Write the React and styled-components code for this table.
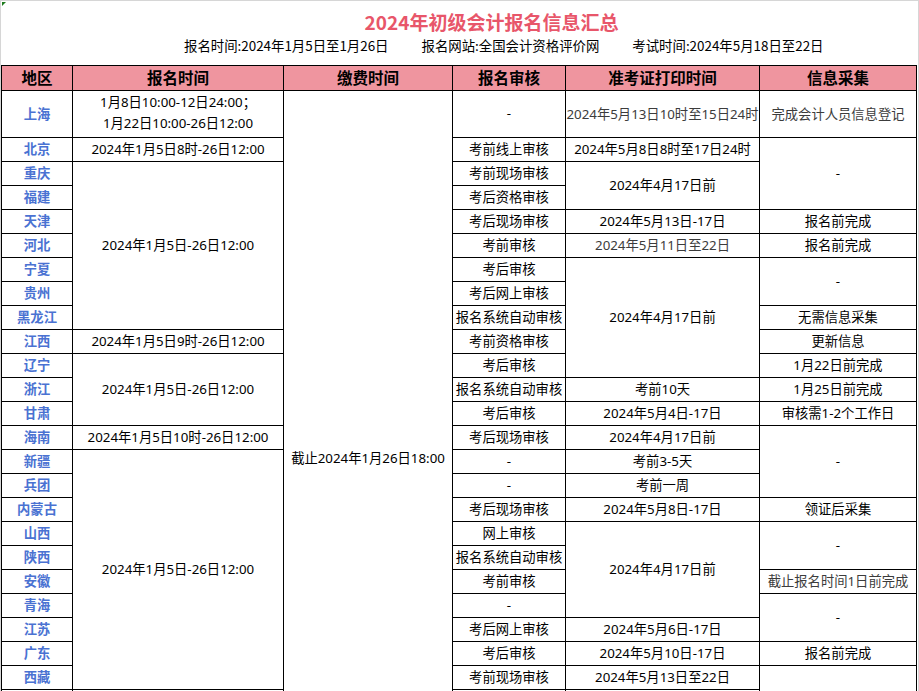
import React from 'react';
import styled, { createGlobalStyle } from 'styled-components';

const GlobalStyle = createGlobalStyle`
  html, body {
    margin: 0;
    padding: 0;
    overflow: hidden;
    background: #fff;
  }
  body {
    font-family: "Noto Sans CJK SC", "Noto Sans", sans-serif;
    color: #000;
  }
`;

const regions = [
  '上海', '北京', '重庆', '福建', '天津', '河北', '宁夏', '贵州', '黑龙江', '江西', '辽宁', '浙江',
  '甘肃', '海南', '新疆', '兵团', '内蒙古', '山西', '陕西', '安徽', '青海', '江苏', '广东', '西藏',
];

// [start, span, text, gray]
const signupTimes = [
  [0, 1, ['1月8日10:00-12日24:00；', '1月22日10:00-26日12:00']],
  [1, 1, '2024年1月5日8时-26日12:00'],
  [2, 7, '2024年1月5日-26日12:00'],
  [9, 1, '2024年1月5日9时-26日12:00'],
  [10, 3, '2024年1月5日-26日12:00'],
  [13, 1, '2024年1月5日10时-26日12:00'],
  [14, 10, '2024年1月5日-26日12:00'],
];

const reviews = [
  '-', '考前线上审核', '考前现场审核', '考后资格审核', '考后现场审核', '考前审核', '考后审核',
  '考后网上审核', '报名系统自动审核', '考前资格审核', '考后审核', '报名系统自动审核', '考后审核',
  '考后现场审核', '-', '-', '考后现场审核', '网上审核', '报名系统自动审核', '考前审核', '-',
  '考后网上审核', '考后审核', '考前现场审核',
];

const printTimes = [
  [0, 1, '2024年5月13日10时至15日24时', true],
  [1, 1, '2024年5月8日8时至17日24时'],
  [2, 2, '2024年4月17日前'],
  [4, 1, '2024年5月13日-17日'],
  [5, 1, '2024年5月11日至22日', true],
  [6, 5, '2024年4月17日前'],
  [11, 1, '考前10天'],
  [12, 1, '2024年5月4日-17日'],
  [13, 1, '2024年4月17日前'],
  [14, 1, '考前3-5天'],
  [15, 1, '考前一周'],
  [16, 1, '2024年5月8日-17日'],
  [17, 4, '2024年4月17日前'],
  [21, 1, '2024年5月6日-17日'],
  [22, 1, '2024年5月10日-17日'],
  [23, 1, '2024年5月13日至22日'],
];

const infoCollect = [
  [0, 1, '完成会计人员信息登记', true],
  [1, 3, '-'],
  [4, 1, '报名前完成'],
  [5, 1, '报名前完成'],
  [6, 2, '-'],
  [8, 1, '无需信息采集'],
  [9, 1, '更新信息'],
  [10, 1, '1月22日前完成'],
  [11, 1, '1月25日前完成'],
  [12, 1, '审核需1-2个工作日'],
  [13, 3, '-'],
  [16, 1, '领证后采集'],
  [17, 2, '-'],
  [19, 1, '截止报名时间1日前完成', true],
  [20, 2, '-'],
  [22, 1, '报名前完成'],
  [23, 2, ''],
];

const headers = ['地区', '报名时间', '缴费时间', '报名审核', '准考证打印时间', '信息采集'];

function App() {
  return (
    <Page>
      <GlobalStyle />
      <CornerMark />
      <Heading>
        <Title>2024年初级会计报名信息汇总</Title>
        <SubLine>
          <span>报名时间:2024年1月5日至1月26日</span>
          <span>报名网站:全国会计资格评价网</span>
          <span>考试时间:2024年5月18日至22日</span>
        </SubLine>
      </Heading>

      <Sheet>
        {headers.map((h, i) => (
          <HeadCell key={h} $col={i + 1}>{h}</HeadCell>
        ))}

        {regions.map((r, i) => (
          <RegionCell key={r} $col={1} $row={i + 2}>{r}</RegionCell>
        ))}

        {signupTimes.map(([start, span, text]) => (
          <Cell key={'s' + start} $col={2} $row={start + 2} $span={span}>
            {Array.isArray(text) ? (
              <Lines>
                {text.map((t) => <div key={t}>{t}</div>)}
              </Lines>
            ) : text}
          </Cell>
        ))}

        <PayCell $col={3} $row={2} $span={25}>截止2024年1月26日18:00</PayCell>

        {reviews.map((t, i) => (
          <Cell key={'r' + i} $col={4} $row={i + 2}>{t}</Cell>
        ))}

        {printTimes.map(([start, span, text, gray]) => (
          <Cell key={'p' + start} $col={5} $row={start + 2} $span={span} $gray={gray}>
            {text}
          </Cell>
        ))}

        {infoCollect.map(([start, span, text, gray]) => (
          <Cell key={'c' + start} $col={6} $row={start + 2} $span={span} $gray={gray}>
            {text}
          </Cell>
        ))}

        {[1, 2, 4, 5].map((c) => (
          <Cell key={'f' + c} $col={c} $row={26} />
        ))}
      </Sheet>
    </Page>
  );
}

export default App;

const Page = styled.div`
  position: relative;
  width: 919px;
  height: 691px;
  box-sizing: border-box;
  border-top: 1px solid #d6d6d6;
  border-left: 1px solid #d6d6d6;
  border-right: 1px solid #d6d6d6;
  overflow: hidden;
`;

const CornerMark = styled.div`
  position: absolute;
  top: 1px;
  left: 1px;
  width: 0;
  height: 0;
  border-top: 4px solid #1e7b1e;
  border-right: 4px solid transparent;
`;

const Heading = styled.div`
  height: 64px;
  box-sizing: border-box;
  padding-top: 7px;
`;

const Title = styled.div`
  text-align: center;
  padding-left: 64px;
  font-size: 19px;
  line-height: 28px;
  font-weight: 700;
  color: #e8566a;
`;

const SubLine = styled.div`
  display: flex;
  gap: 33px;
  padding-left: 183px;
  font-size: 13.4px;
  line-height: 18px;
  white-space: nowrap;
`;

const Sheet = styled.div`
  display: grid;
  grid-template-columns: 70px 210px 168px 112px 193px 156px;
  grid-template-rows: 24px 46px repeat(24, 23px);
  gap: 1px;
  padding: 1px;
  width: max-content;
  background: #000;
`;

const Cell = styled.div`
  grid-column: ${(p) => p.$col};
  grid-row: ${(p) => p.$row} / span ${(p) => p.$span || 1};
  display: flex;
  align-items: center;
  justify-content: center;
  padding-bottom: 2px;
  background: #fff;
  font-family: "Noto Sans", "Noto Sans CJK SC", sans-serif;
  font-size: 13.3px;
  color: ${(p) => (p.$gray ? '#3c3c3c' : '#000')};
  white-space: nowrap;
  overflow: visible;
  min-width: 0;
`;

const HeadCell = styled(Cell)`
  grid-row: 1;
  background: #ef959f;
  font-size: 15.5px;
  font-weight: 700;
`;

const RegionCell = styled(Cell)`
  color: #4a72d2;
  font-weight: 700;
`;

const PayCell = styled(Cell)`
  padding-top: 113px;
`;

const Lines = styled.div`
  text-align: center;
  line-height: 21px;
`;
